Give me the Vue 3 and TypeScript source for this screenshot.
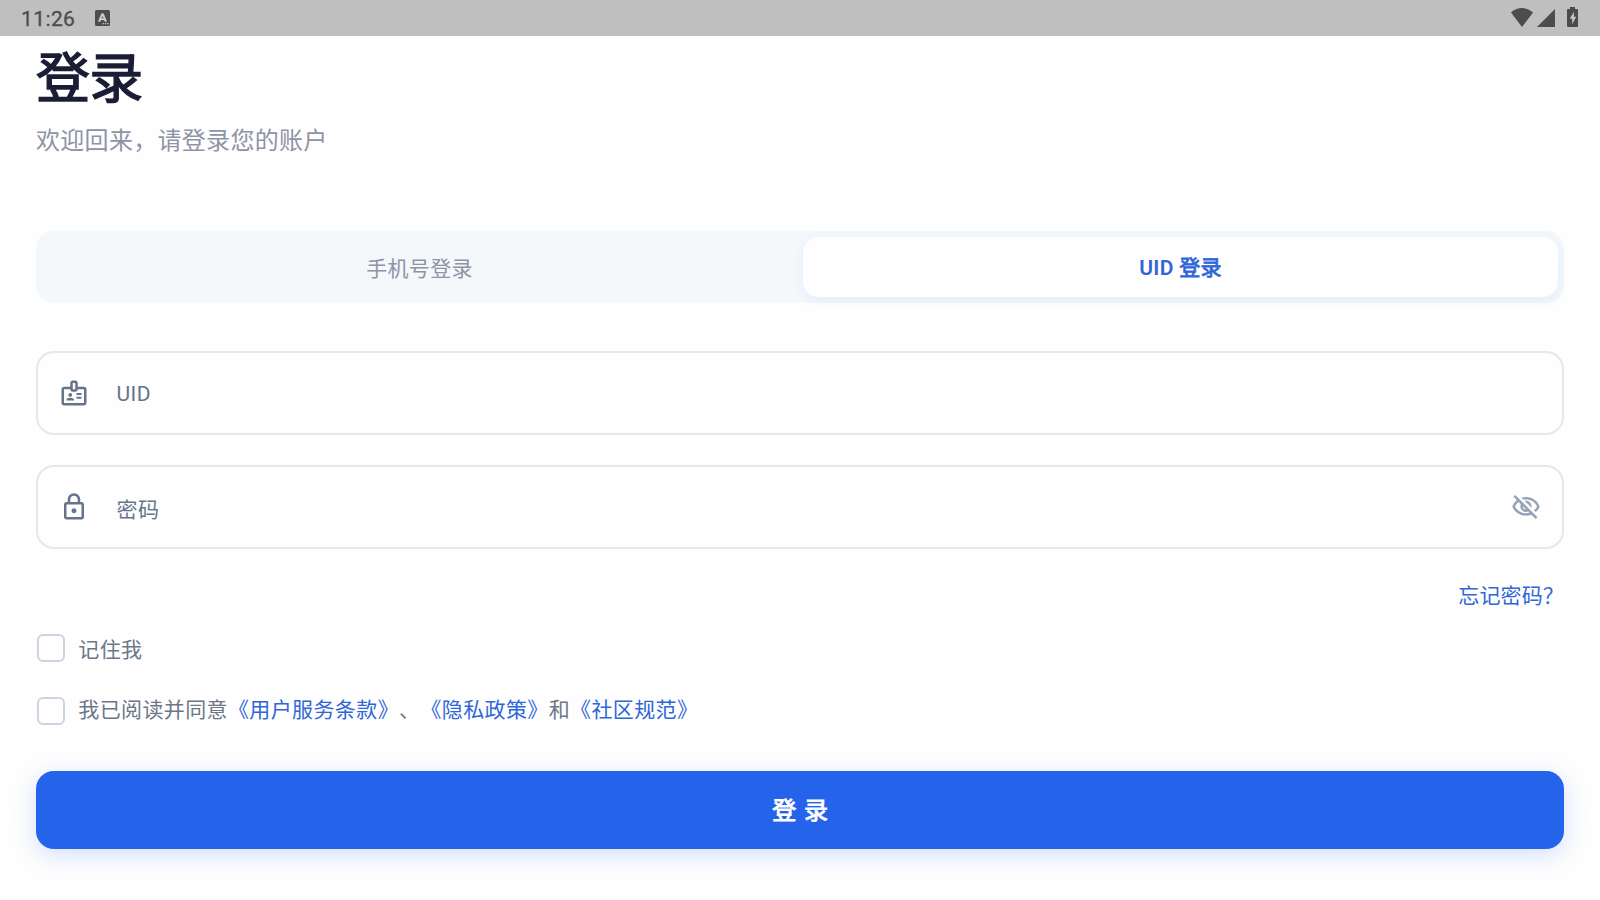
<script setup lang="ts">
import { ref } from 'vue'

type LoginMode = 'phone' | 'uid'

const mode = ref<LoginMode>('uid')
const uid = ref('')
const password = ref('')
const showPassword = ref(false)
const remember = ref(false)
const agreed = ref(false)
</script>

<template>
  <div class="screen">
    <header class="status">
      <span class="clock">11:26</span>
      <svg class="ime" viewBox="0 0 15 16">
        <rect width="15" height="16" rx="1.500" fill="#4c4c4c" />
        <path d="M3.200 11.500 6.500 3.400h2l3.300 8.100H9.800l-.6-1.600H5.800l-.6 1.600zM6.400 8.400h2.200L7.500 5.500z" fill="#d0d0d0" stroke="#d0d0d0" stroke-width=".3" />
        <path d="M7.600 13h1.300v1.300H7.600zm2.300 0h1.300v1.300H9.900zm2.300 0h1.300v1.300h-1.300z" fill="#d0d0d0" />
      </svg>
      <span class="grow"></span>
      <svg class="wifi" viewBox="0 0 22 19" fill="#4c4c4c">
        <path d="M11 19 0 4.600C3.100 1.600 6.900 0 11 0s7.900 1.600 11 4.600z" />
      </svg>
      <svg class="cell" viewBox="0 0 18 18" fill="#4c4c4c"><path d="M0 18 18 0v18z" /></svg>
      <svg class="battery" viewBox="0 0 11 20">
        <path d="M3 0h5v2h2q1 0 1 1v16q0 1-1 1H1q-1 0-1-1V3q0-1 1-1h2z" fill="#4c4c4c" />
        <path d="M6.800 4.800 2.800 11.800h2.400v5.400l4-7.400H6.800z" fill="#c8c8c8" />
      </svg>
    </header>

    <main class="content">
      <h1 class="title">登录</h1>
      <p class="subtitle">欢迎回来，请登录您的账户</p>

      <div class="tabs">
        <button class="tab" :class="{ active: mode === 'phone' }" @click="mode = 'phone'">手机号登录</button>
        <button class="tab" :class="{ active: mode === 'uid' }" @click="mode = 'uid'">UID <span class="cn">登录</span></button>
      </div>

      <label class="field">
        <svg class="icon" viewBox="0 0 24 24" fill="currentColor">
          <path d="M20 7h-5V4c0-1.100-.9-2-2-2h-2c-1.100 0-2 .9-2 2v3H4c-1.100 0-2 .9-2 2v11c0 1.100.9 2 2 2h16c1.100 0 2-.9 2-2V9c0-1.100-.9-2-2-2zm-9-3h2v5h-2V4zm9 16H4V9h5c0 1.100.9 2 2 2h2c1.100 0 2-.9 2-2h5v11z" />
          <circle cx="9" cy="13.500" r="1.500" />
          <path d="M11.080 16.180C10.440 15.900 9.740 15.750 9 15.750s-1.440.15-2.080.43C6.360 16.420 6 16.960 6 17.570V18h6v-.43c0-.61-.36-1.150-.92-1.390zM14 12h4v1.500h-4zM14 15h4v1.500h-4z" />
        </svg>
        <input v-model="uid" class="input" placeholder="UID" />
      </label>

      <label class="field">
        <svg class="icon" viewBox="0 0 24 24" fill="currentColor">
          <path d="M18 8h-1V6c0-2.760-2.240-5-5-5S7 3.240 7 6v2H6c-1.100 0-2 .9-2 2v10c0 1.100.9 2 2 2h12c1.100 0 2-.9 2-2V10c0-1.100-.9-2-2-2zM9 6c0-1.660 1.340-3 3-3s3 1.340 3 3v2H9V6zm9 14H6V10h12v10zm-6-3c1.100 0 2-.9 2-2s-.9-2-2-2-2 .9-2 2 .9 2 2 2z" />
        </svg>
        <input v-model="password" class="input cjk" :type="showPassword ? 'text' : 'password'" placeholder="密码" />
        <svg class="icon eye" viewBox="0 0 24 24" fill="currentColor" @click.prevent="showPassword = !showPassword">
          <path d="M12 6c3.790 0 7.170 2.130 8.820 5.500-.59 1.220-1.420 2.270-2.410 3.120l1.410 1.410c1.390-1.230 2.490-2.770 3.180-4.530C21.270 7.110 17 4 12 4c-1.270 0-2.490.2-3.640.57l1.650 1.650C10.660 6.090 11.320 6 12 6zm-1.070 1.140L13 9.210c.57.25 1.030.71 1.280 1.280l2.070 2.070c.08-.34.14-.7.14-1.070C16.500 9.010 14.480 7 12 7c-.37 0-.72.05-1.070.14zM2.010 3.870l2.680 2.680C3.060 7.830 1.770 9.530 1 11.500 2.730 15.890 7 19 12 19c1.520 0 2.980-.29 4.320-.82l3.420 3.420 1.410-1.410L3.420 2.450 2.010 3.870zm7.500 7.500 2.610 2.610c-.04.01-.08.02-.12.02-1.380 0-2.500-1.120-2.500-2.500 0-.05.01-.08.01-.13zm-3.400-3.400 1.750 1.750c-.23.55-.36 1.150-.36 1.780 0 2.480 2.020 4.500 4.500 4.500.63 0 1.230-.13 1.770-.36l.98.98c-.88.24-1.800.38-2.750.38-3.790 0-7.170-2.130-8.820-5.500.7-1.430 1.720-2.610 2.930-3.530z" />
        </svg>
      </label>

      <a class="forgot">忘记密码？</a>

      <label class="check first">
        <input v-model="remember" class="box" type="checkbox" />
        <span class="label">记住我</span>
      </label>
      <label class="check second">
        <input v-model="agreed" class="box" type="checkbox" />
        <span class="label">我已阅读并同意<a>《用户服务条款》</a>、<a>《隐私政策》</a>和<a>《社区规范》</a></span>
      </label>

      <button class="submit">登 录</button>
    </main>
  </div>
</template>

<style>
body {
  margin: 0;
  background: #fefefe;
}
</style>

<style scoped>
.screen {
  width: 1600px;
  height: 900px;
  overflow: hidden;
  background: #fefefe;
  font-family: Roboto, 'Noto Sans CJK SC', sans-serif;
  font-size: 21px;
  letter-spacing: 0.3px;
  text-spacing-trim: space-all;
}
.screen *,
.screen {
  box-sizing: border-box;
}
.status {
  height: 36px;
  padding: 0 22px 0 21px;
  display: flex;
  align-items: center;
  background: #bfbfbf;
  color: #4c4c4c;
}
.clock {
  width: 74px;
  padding-top: 1px;
  font-size: 21px;
  line-height: 36px;
  letter-spacing: 0.4px;
  -webkit-text-stroke: 0.3px #4c4c4c;
}
.ime {
  width: 15px;
  height: 16px;
}
.grow {
  flex: 1;
}
.wifi {
  width: 22px;
  height: 19px;
  margin: 0 4px 2px 0;
}
.cell {
  width: 18px;
  height: 18px;
  margin-right: 12px;
}
.battery {
  width: 11px;
  height: 20px;
  margin-bottom: 2px;
}
.content {
  display: flex;
  flex-direction: column;
  padding: 0 36px;
}
.title {
  margin: 8px 0 0;
  height: 72px;
  line-height: 72px;
  font-size: 54px;
  font-weight: 400;
  letter-spacing: -0.8px;
  -webkit-text-stroke: 1.4px #1a1d35;
  color: #1a1d35;
}
.subtitle {
  margin: 7px 0 0;
  height: 36px;
  line-height: 36px;
  font-size: 24px;
  color: #8e94a6;
}
.tabs {
  height: 72px;
  margin-top: 72px;
  padding: 6px;
  display: flex;
  gap: 6px;
  border-radius: 18px;
  background: #f4f8fb;
}
.tab {
  flex: 1;
  padding: 0;
  border: 0;
  border-radius: 15px;
  background: none;
  font: inherit;
  letter-spacing: 0.3px;
  color: #8e94a6;
}
.tab.active {
  padding-bottom: 2px;
  background: #fefefe;
  box-shadow: 0 3px 12px rgba(37, 99, 235, 0.08);
  color: #2f66d8;
  font-weight: 600;
}
.cn {
  font-weight: 400;
  -webkit-text-stroke: 0.8px currentColor;
}
.field {
  height: 84px;
  margin-top: 48px;
  padding: 0 21px;
  display: flex;
  align-items: center;
  border: 2px solid #e2e8ee;
  border-radius: 18px;
}
.field + .field {
  margin-top: 30px;
}
.icon {
  width: 30px;
  height: 30px;
  flex: none;
  color: #64748b;
}
.eye {
  color: #94a3b8;
}
.input {
  flex: 1;
  height: 60px;
  margin-left: 27.5px;
  padding: 2px 0 0;
  border: 0;
  outline: 0;
  background: none;
  font: inherit;
  letter-spacing: 0.4px;
  color: #1a1d35;
}
.input.cjk {
  padding-top: 5px;
}
.input::placeholder {
  color: #64748b;
  opacity: 1;
}
.forgot {
  align-self: flex-end;
  height: 30px;
  line-height: 30px;
  margin: 32px 0 0;
  letter-spacing: 0.15px;
  color: #2f66d8;
}
.check {
  height: 30px;
  display: flex;
  align-items: center;
}
.check.first {
  margin-top: 22px;
}
.check.second {
  margin-top: 33px;
}
.box {
  appearance: none;
  width: 28px;
  height: 28px;
  margin: 0 13.3px 0 1px;
  border: 2px solid #cbd5e1;
  border-radius: 6px;
}
.box:checked {
  background: #2563eb;
  border-color: #2563eb;
}
.label {
  line-height: 30px;
  letter-spacing: 0.38px;
  color: #6b7789;
}
.first .label {
  padding-top: 4px;
}
.second .label {
  padding-bottom: 2px;
}
.label a {
  color: #2f66d8;
}
.submit {
  height: 78px;
  margin-top: 45px;
  padding: 0 0 4px 1px;
  border: 0;
  border-radius: 18px;
  background: #2563eb;
  box-shadow: 0 6px 24px rgba(37, 99, 235, 0.2);
  color: #fefefe;
  font: inherit;
  font-size: 24px;
  letter-spacing: 0.9px;
  -webkit-text-stroke: 0.9px #fefefe;
}
</style>
